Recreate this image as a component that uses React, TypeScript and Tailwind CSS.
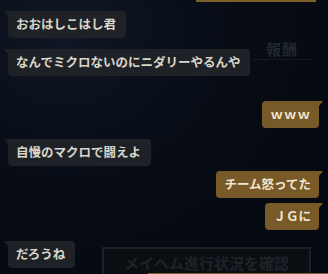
import React from "react";

type Side = "left" | "right";

function Bubble({ text, side, className = "", textClass = "" }: { text: string; side: Side; className?: string; textClass?: string }) {
  const left = side === "left";
  return (
    <div
      className={
        left
          ? `relative self-start h-[27px] flex items-center pl-2 pr-[10px] rounded-[4px] rounded-tl-none bg-[#1e2227] text-[#dad6ca] ${className}`
          : `relative self-end h-[27px] flex items-center px-2 rounded-[4px] rounded-tr-none bg-[#785a28] text-[#f0e6d2] ${className}`
      }
    >
      {left ? (
        <span className="absolute left-[-4px] top-0 w-0 h-0 border-t-[5px] border-t-[#1e2227] border-l-[4px] border-l-transparent" />
      ) : (
        <span className="absolute right-[-4px] top-0 w-0 h-0 border-t-[5px] border-t-[#785a28] border-r-[4px] border-r-transparent" />
      )}
      <span className={`text-[12.5px] leading-none font-bold whitespace-nowrap ${textClass}`}>{text}</span>
    </div>
  );
}

export default function App() {
  return (
    <div
      className="relative w-[328px] h-[274px] overflow-hidden bg-[#060b13]"
      style={{ fontFamily: '"Noto Sans CJK JP", "Noto Sans", sans-serif' }}
    >
      {/* background layer */}
      <div className="absolute inset-0 bg-[radial-gradient(ellipse_at_20%_10%,#0e1724_0%,#070c15_45%,#04080f_100%)]" />
      <div className="absolute left-[196px] top-0 w-[120px] h-[2px] bg-[#7d5f2b]" />
      <div className="absolute left-[252px] top-[41px] w-[60px] flex flex-col items-center">
        <span className="text-[15px] font-bold leading-none text-[#22282f] tracking-[1px]">報酬</span>
        <div className="mt-[3px] w-full h-px bg-[#151b23]" />
      </div>
      <div className="absolute left-[102px] top-[247px] w-[209px] h-[40px] border-2 border-[#1b2025] bg-[#0a0e13] flex justify-center pt-[4px]">
        <span className="text-[15px] font-bold leading-none text-[#1e2328] mt-[2px]">メイヘム進行状況を確認</span>
      </div>
      <div className="absolute left-[148px] top-[273px] w-[180px] h-px bg-[#7d5f2b]" />

      {/* chat */}
      <div className="relative flex flex-col pt-[11px] pl-[8px] pr-[9px]">
        <Bubble side="left" text="おおはしこはし君" />
        <Bubble side="left" text="なんでミクロないのにニダリーやるんや" className="mt-[11px]" />
        <Bubble side="right" text="ｗｗｗ" className="mt-[25px]" textClass="tracking-[1px]" />
        <Bubble side="left" text="自慢のマクロで闘えよ" className="mt-[11px]" />
        <Bubble side="right" text="チーム怒ってた" className="mt-[5px]" />
        <Bubble side="right" text="ＪＧに" className="mt-[5px]" />
        <Bubble side="left" text="だろうね" className="mt-[11px]" />
      </div>
    </div>
  );
}
